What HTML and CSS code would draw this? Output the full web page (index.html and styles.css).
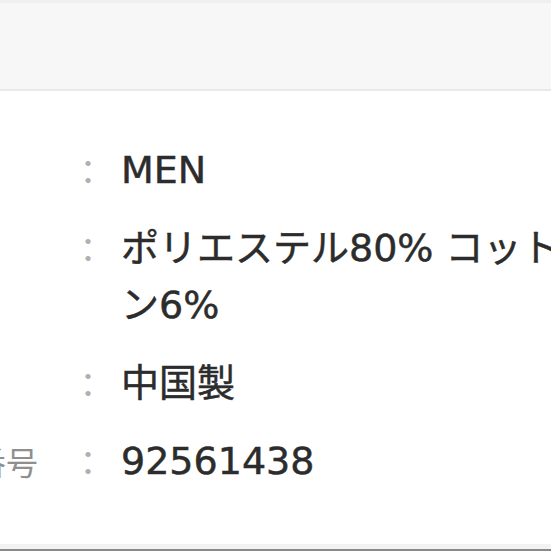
FILE: index.html
```html
<!DOCTYPE html>
<html lang="ja">
<head>
    <meta charset="UTF-8">
    <meta name="viewport" content="width=device-width, initial-scale=1.0">
    <title>商品詳細</title>
    <link rel="stylesheet" href="styles.css">
</head>
<body>
    <div class="page">
        <div class="top-bar"></div>

        <div class="specs">
            <div class="spec-row">
                <div class="spec-label">対象</div>
                <div class="spec-sep">：</div>
                <div class="spec-value">MEN</div>
            </div>
            <div class="spec-row">
                <div class="spec-label">素材</div>
                <div class="spec-sep">：</div>
                <div class="spec-value">ポリエステル80% コットン14% ポリウレタン6%</div>
            </div>
            <div class="spec-row">
                <div class="spec-label">産地</div>
                <div class="spec-sep">：</div>
                <div class="spec-value">中国製</div>
            </div>
            <div class="spec-row">
                <div class="spec-label">商品番号</div>
                <div class="spec-sep">：</div>
                <div class="spec-value">92561438</div>
            </div>
        </div>

        <div class="bottom-bar"></div>
    </div>
</body>
</html>
```

FILE: styles.css
```css
html, body {
    margin: 0;
    padding: 0;
    overflow: hidden;
}

body {
    font-family: "DejaVu Sans", "Noto Sans CJK JP", sans-serif;
    background-color: #ffffff;
    color: #333333;
}

.page {
    width: 551px;
    height: 551px;
    display: flex;
    flex-direction: column;
}

.top-bar {
    height: 86px;
    background-color: #f7f7f7;
    border-top: 3px solid #efefef;
    border-bottom: 2px solid #e9e9e9;
    flex-shrink: 0;
}

.specs {
    flex: 1;
    margin-left: -90px;
    padding-top: 51px;
    display: flex;
    flex-direction: column;
    gap: 21px;
}

.spec-row {
    display: flex;
    align-items: flex-start;
}

.spec-label {
    width: 159px;
    flex-shrink: 0;
    font-family: "Noto Sans CJK JP", sans-serif;
    font-size: 32px;
    line-height: 57px;
    color: #8f8f8f;
}

.spec-sep {
    width: 38px;
    flex-shrink: 0;
    text-align: center;
    font-family: "Noto Sans CJK JP", sans-serif;
    font-size: 34px;
    line-height: 57px;
    color: #b0b0b0;
}

.spec-value {
    width: 780px;
    flex-shrink: 0;
    margin-left: 14px;
    font-size: 38px;
    line-height: 57px;
    color: #2c2c2c;
    -webkit-text-stroke: 0.5px #2c2c2c;
}

/* section divider at the very bottom */
.bottom-bar {
    height: 5px;
    background-color: #f2f2f2;
    border-bottom: 2px solid #8a8a8a;
    flex-shrink: 0;
}
```
